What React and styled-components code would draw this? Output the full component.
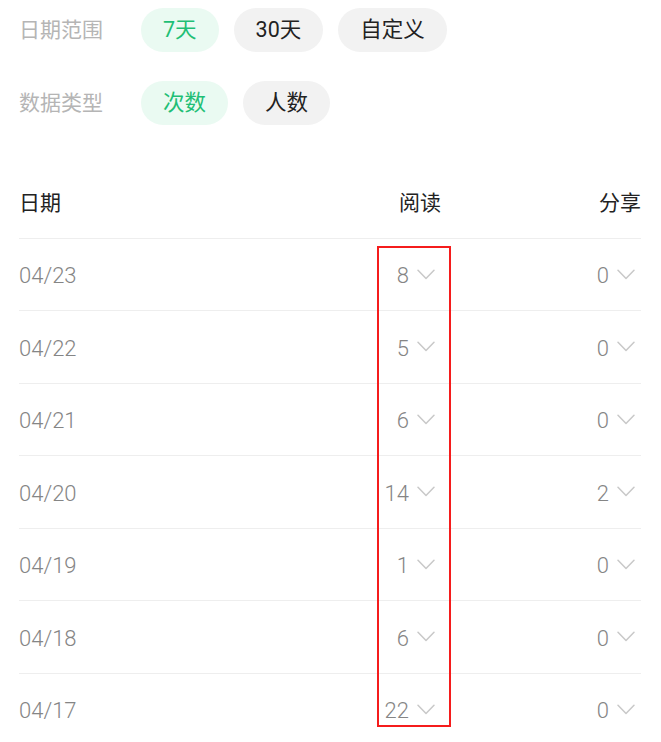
import React from 'react';
import styled, { createGlobalStyle } from 'styled-components';

const GlobalStyle = createGlobalStyle`
	html, body {
		margin: 0;
		padding: 0;
		background: #fff;
	}
	body {
		font-family: Roboto, "Noto Sans CJK SC", sans-serif;
	}
`;

const Page = styled.div`
	position: relative;
	padding: 8px 20px 0 19px;
	width: 661px;
	box-sizing: border-box;
`;

const FilterRow = styled.div`
	display: flex;
	align-items: center;
	height: 44px;
	margin-bottom: 29px;

	&:last-of-type {
		margin-bottom: 0;
	}
`;

const FilterLabel = styled.div`
	flex: 0 0 122px;
	font-size: 21px;
	color: #b5b5b5;
	line-height: 44px;
`;

const Chips = styled.div`
	display: flex;
	gap: 15px;
`;

const Chip = styled.button`
	height: 44px;
	padding: 0 22px;
	border: none;
	border-radius: 22px;
	font-family: inherit;
	font-size: 21.5px;
	line-height: 44px;
	background: ${p => (p.$active ? '#eafaf2' : '#f2f2f2')};
	color: ${p => (p.$active ? '#1fbf76' : '#222')};
	cursor: pointer;
`;

const Table = styled.div`
	margin-top: 41px;
`;

const Row = styled.div`
	display: grid;
	grid-template-columns: 1fr 200px 200px;
	align-items: center;
	height: 72.5px;
	box-sizing: border-box;
	border-bottom: 1px solid #eeeeee;
`;

const HeadCell = styled.div`
	font-size: 21px;
	color: #222;
	margin-top: -2px;
	text-align: ${p => (p.$right ? 'right' : 'left')};
`;

const DateCell = styled.div`
	font-size: 22px;
	font-weight: 300;
	color: #858585;
	padding-top: 3px;
`;

const ValueCell = styled.div`
	display: flex;
	justify-content: flex-end;
	align-items: center;
	font-size: 22px;
	font-weight: 300;
	color: #858585;
	padding: 3px 6px 0 0;

	svg {
		margin-left: 8px;
		margin-top: -3px;
	}
`;

const Highlight = styled.div`
	position: absolute;
	left: 377px;
	top: 246px;
	width: 74px;
	height: 481px;
	box-sizing: border-box;
	border: 2px solid #f51c1c;
	pointer-events: none;
`;

const Chevron = () => (
	<svg width="18" height="11" viewBox="0 0 18 11" fill="none">
		<path d="M1 1.2L9 9.5L17 1.2" stroke="#c9c9c9" strokeWidth="1.5" strokeLinecap="round" strokeLinejoin="round" />
	</svg>
);

const rows = [
	{ date: '04/23', read: 8, share: 0 },
	{ date: '04/22', read: 5, share: 0 },
	{ date: '04/21', read: 6, share: 0 },
	{ date: '04/20', read: 14, share: 2 },
	{ date: '04/19', read: 1, share: 0 },
	{ date: '04/18', read: 6, share: 0 },
	{ date: '04/17', read: 22, share: 0 },
];

export default function App() {
	return (
		<Page>
			<GlobalStyle />
			<FilterRow>
				<FilterLabel>日期范围</FilterLabel>
				<Chips>
					<Chip $active>7天</Chip>
					<Chip>30天</Chip>
					<Chip>自定义</Chip>
				</Chips>
			</FilterRow>
			<FilterRow>
				<FilterLabel>数据类型</FilterLabel>
				<Chips>
					<Chip $active>次数</Chip>
					<Chip>人数</Chip>
				</Chips>
			</FilterRow>
			<Table>
				<Row>
					<HeadCell>日期</HeadCell>
					<HeadCell $right>阅读</HeadCell>
					<HeadCell $right>分享</HeadCell>
				</Row>
				{rows.map(r => (
					<Row key={r.date}>
						<DateCell>{r.date}</DateCell>
						<ValueCell>{r.read}<Chevron /></ValueCell>
						<ValueCell>{r.share}<Chevron /></ValueCell>
					</Row>
				))}
			</Table>
			<Highlight />
		</Page>
	);
}
